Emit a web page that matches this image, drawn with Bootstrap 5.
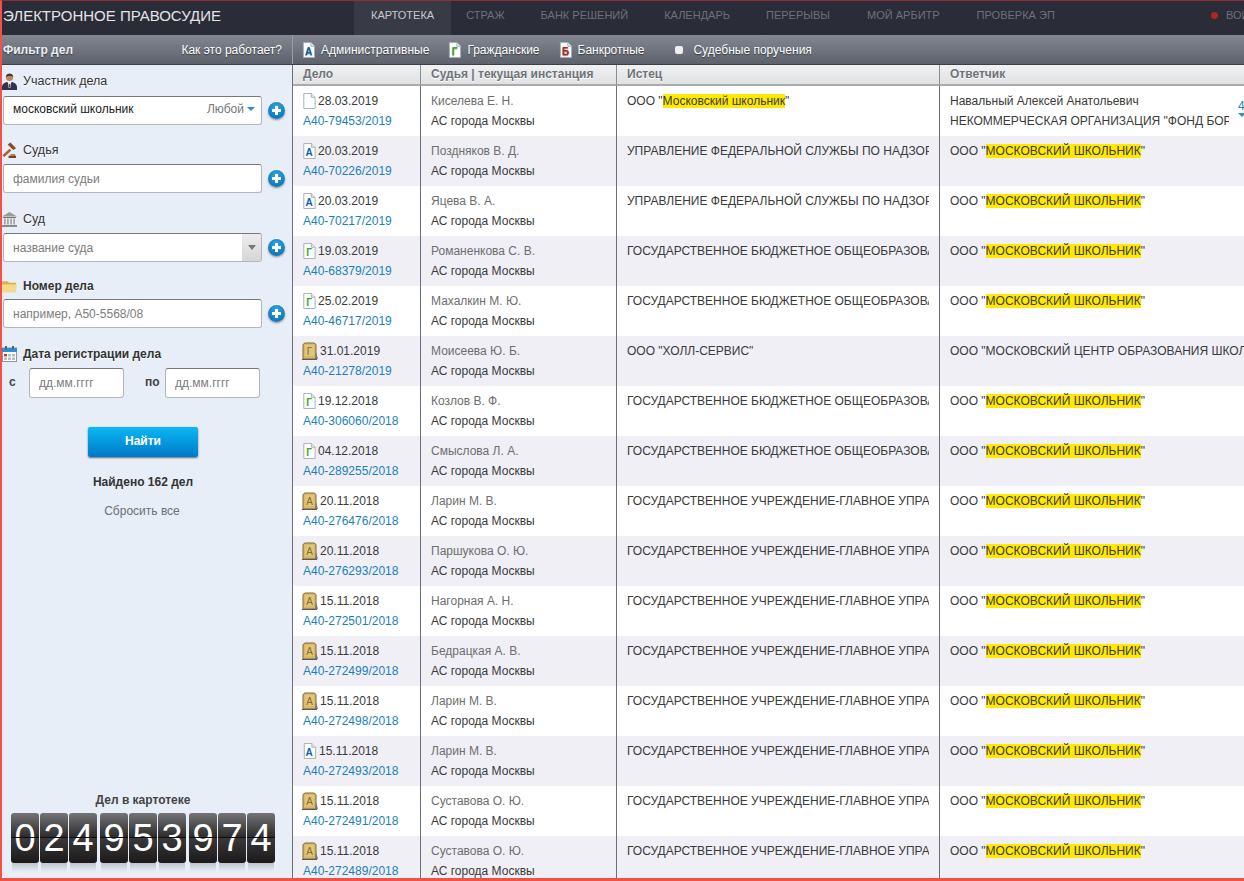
<!DOCTYPE html>
<html lang="ru"><head><meta charset="utf-8"><title>Электронное правосудие</title>
<link href="https://cdn.jsdelivr.net/npm/bootstrap@5.3.0/dist/css/bootstrap.min.css" rel="stylesheet">
<style>
html,body{height:100%;overflow:hidden;margin:0}
body{font-family:"Liberation Sans",Arial,sans-serif;font-size:12px;color:#3a3a3a;background:#fff}
.frame{height:881px;border-left:2px solid #f2514a;border-bottom:3px solid #f2514a;border-top:1px solid #8c2f33;overflow:hidden;display:flex;flex-direction:column}
.topbar{height:34px;flex:none;background:#2a2c38;display:flex;align-items:stretch}
.brand{width:352px;flex:none;color:#e4e4e6;font-size:15px;line-height:29px;padding-left:1px;white-space:nowrap}
.topnav{flex-wrap:nowrap;font-size:11px;white-space:nowrap}
.topnav a{display:block;color:#6f717a;padding:0 18px;line-height:29px;height:34px;text-decoration:none}
.topnav a.now{background:#383a46;color:#c8c9cd;padding:0 17px}
.topnav a:nth-child(2){padding:0 18px 0 15px}
.topnav a:nth-child(6){margin-left:1px}
.topnav a:last-child{margin-left:1px}
.login{margin-left:auto;color:#6f717a;font-size:11px;line-height:29px;white-space:nowrap;width:33px;overflow:hidden;display:flex;align-items:center;gap:8px;padding-bottom:5px}
.login i{display:block;flex:none;width:7px;height:7px;border-radius:50%;background:#b3261e}
.subbar{height:30px;flex:none;display:flex;align-items:center;background:linear-gradient(#828792,#5c616c);border-bottom:1px solid #3b3f48;color:#fff;text-shadow:0 1px 1px rgba(0,0,0,.5)}
.subleft{width:291px;flex:none;display:flex;justify-content:space-between;padding:0 10px 0 1px;border-right:1px solid #9a9ea6;height:100%;align-items:center}
.subleft b{font-size:12px;color:#eef0f4}
.types{display:flex;align-items:center;padding-left:9px;height:100%}
.types span.ty{display:flex;align-items:center;gap:6px}
.ty-next{margin-left:19px}
.ty-order{margin-left:31px}
.check{width:8px;height:8px;background:#eee;border-radius:2px;display:block}
.workspace{flex:1;display:flex;min-height:0}
.side{width:291px;flex:none;background:#e8eef8;border-right:1px solid #6c6f76;display:flex;flex-direction:column;padding:0 0 0 1px;overflow:hidden}
.lbl{display:flex;align-items:center;height:16px;font-size:12.500px;color:#333;text-shadow:0 1px 0 #fff;gap:6px;margin-left:-1px}
.lbl svg{flex:none}
.lbl.bold{font-size:12px;font-weight:700}
.lbl-first{margin-top:8px}
.fieldrow{display:flex;align-items:center;gap:6px}
.fr1{margin-top:7px;margin-bottom:17px}
.fr2{margin-top:6px;margin-bottom:18px}
.fr3{margin-top:6px;margin-bottom:16px}
.fr4{margin-top:5px;margin-bottom:18px}
.fld{width:259px;height:29px;display:flex;align-items:center;background:#fff;border:1px solid #b4b6b8;border-top-color:#77797c;border-radius:3px;overflow:hidden}
.fld input{border:0;outline:0;background:transparent;flex:1;min-width:0;padding:0 9px 0;font-size:12px;color:#222;height:100%;font-family:inherit}
.fr1 .fld input{padding-bottom:3px}
.fld input::placeholder{color:#7d7d7d;opacity:1}
.fld .any{color:#777;padding:0 6px 3px 0;display:flex;align-items:center;gap:3px;white-space:nowrap}
.fld .any i{display:block;border:4px solid transparent;border-top-color:#2b8fc9;border-bottom:0}
.fld .drop{width:19px;height:100%;background:linear-gradient(#ececec,#d6d6d6);display:flex;align-items:center;justify-content:center}
.fld .drop i{display:block;border:4px solid transparent;border-top:5px solid #777;border-bottom:0}
.addbtn{width:17px;height:17px;border-radius:50%;padding:0;border:0;background:radial-gradient(circle at 50% 30%,#2fa5e2,#0069ad);box-shadow:0 1px 2px rgba(0,0,0,.5),0 0 0 1px #fff;display:flex;align-items:center;justify-content:center;flex:none}
.dates{display:flex;align-items:center;margin-top:6px;font-weight:700;color:#444}
.dates .fld{width:95px;height:30px;flex:none}
.dates input{font-weight:400;padding-left:9px}
.dates .s{width:20px;margin-left:6px;padding-bottom:3px}
.dates .p{width:20px;margin-left:21px;padding-bottom:3px}
.findbtn{display:block;width:110px;height:30px;margin:29px 0 0 85px;padding:0 0 2px;border:0;border-radius:2px;background:linear-gradient(#08b8f5,#0079c5);color:#fff;font-size:12px;font-weight:700;box-shadow:0 1px 2px rgba(0,0,0,.55)}
.found{text-align:center;font-weight:700;margin-top:18px;width:280px;line-height:14px;color:#333}
.reset{text-align:center;margin-top:15px;width:278px;line-height:14px;color:#6b6f76}
.countbox{margin-top:auto;padding-bottom:6px}
.counttitle{text-align:center;width:280px;font-weight:700;color:#444;line-height:14px;margin-bottom:6px}
.digits{display:flex;margin-left:8px}
.dg{position:relative;width:28px;height:50px;margin-right:1px;border-radius:3px;background:linear-gradient(#747476,#2a2829 50%,#3a3839 50%,#1b191a);color:#fff;font-size:38px;line-height:50px;text-align:center;margin-bottom:9px}
.dg::before{content:"";position:absolute;left:0;right:0;top:24px;height:1px;background:#0d0d0d}
.dg::after{content:"";position:absolute;left:1px;right:1px;top:50px;height:9px;background:linear-gradient(rgba(150,155,165,.5),rgba(150,155,165,0))}
.dg.gapr{margin-right:3px}
.results{flex:1;min-width:0;overflow:hidden;background:#fff}
.caselist{table-layout:fixed;width:951px;margin:0;font-size:12px;border-collapse:separate;border-spacing:0}
.caselist>thead>tr>th{height:21px;padding:0 10px 2px;background:linear-gradient(#f0f1f2,#dfe1e3);color:#6f7378;font-weight:700;font-size:12px;line-height:16px;border-bottom:2px solid #a9abae;border-right:1px solid #8a8d92;box-shadow:none;white-space:nowrap;text-shadow:0 1px 0 #fff}
.caselist>tbody>tr>td{height:50px;padding:5px 10px 0;vertical-align:top;line-height:20px;border:0;border-right:1px solid #6c6f76;box-shadow:none;background:#fff;color:#3a3a3a}
.caselist>tbody>tr:nth-child(even)>td{background:#efeff5}
.caselist>thead>tr>th:last-child,.caselist>tbody>tr>td:last-child{border-right:0;padding-right:0;position:relative}
.caselist a{color:#1a7fbd;text-decoration:none;display:block}
.casedate{display:flex;align-items:center;gap:2px;height:20px;margin-left:-1px;color:#3a3a3a}
.judge{color:#6e6e6e}
.clip{overflow:hidden;white-space:nowrap}
.clip-narrow{width:279px}
.hit{background:#ffe900}
.more{position:absolute;right:-2px;top:14px;width:8px;color:#2c7fb0;font-size:12px;line-height:13px;overflow:hidden}
.more i{display:block;border:4px solid transparent;border-top-color:#2b8fc9;border-bottom:0;width:0}
</style></head><body>
<svg width="0" height="0" class="d-none">
<defs>
<symbol id="page" viewBox="0 0 14 17"><path d="M1.500.5h8l4 4v12h-12z" fill="#fff" stroke="#9fb0b5"/><path d="M9.500.5v4h4" fill="#e3eaea" stroke="#9fb0b5"/></symbol>
<symbol id="goldbook" viewBox="0 0 16 18"><path d="M1 2.500 3 1h9l2 1.500V17H1z" fill="#d9b868" stroke="#7d6a38"/><path d="M3 3h9v11H3z" fill="#e0c57c"/><path d="M14 10l2 7h-3z" fill="#777"/><path d="M0 17h15v1H0z" fill="#5a5a5a"/></symbol>
</defs></svg>
<div class="frame">
 <header class="topbar">
  <div class="brand">ЭЛЕКТРОННОЕ ПРАВОСУДИЕ</div>
  <nav class="nav topnav">
   <a class="now" href="#">КАРТОТЕКА</a><a href="#">СТРАЖ</a><a href="#">БАНК РЕШЕНИЙ</a><a href="#">КАЛЕНДАРЬ</a><a href="#">ПЕРЕРЫВЫ</a><a href="#">МОЙ АРБИТР</a><a href="#">ПРОВЕРКА ЭП</a>
  </nav>
  <div class="login"><i></i>ВОЙТИ</div>
 </header>
 <div class="subbar">
  <div class="subleft"><b>Фильтр дел</b><span>Как это работает?</span></div>
  <div class="types">
   <span class="ty"><svg width="13" height="16"><use href="#page"/><text x="6.500" y="13" font-size="10" font-weight="700" fill="#0d5fb0" text-anchor="middle">А</text></svg>Административные</span>
   <span class="ty ty-next"><svg width="13" height="16"><use href="#page"/><text x="6.500" y="13" font-size="10" font-weight="700" fill="#3aa81e" text-anchor="middle">Г</text></svg>Гражданские</span>
   <span class="ty ty-next"><svg width="13" height="16"><use href="#page"/><text x="6.500" y="13" font-size="10" font-weight="700" fill="#b3201c" text-anchor="middle">Б</text></svg>Банкротные</span>
   <span class="ty ty-order"><i class="check"></i><span class="ms-1">Судебные поручения</span></span>
  </div>
 </div>
 <div class="workspace">
  <aside class="side">
   <div class="lbl lbl-first"><svg width="15" height="17" viewBox="0 0 15 17"><circle cx="7.500" cy="4.500" r="3.600" fill="#b98a63"/><path d="M3.800 3.800C4 1 6 .4 7.500.4s3.600.7 3.700 3.400c-1.500-1-5.500-1-7.400 0z" fill="#4b3524"/><path d="M0 17v-3c0-3 3-4.500 5-5l2.500 2 2.500-2c2 .5 5 2 5 5v3z" fill="#2b3656"/><path d="M6 9l1.500 2L9 9l-.7 6h-1.600z" fill="#fff"/><path d="M7 11h1l.3 3-.8 1-.8-1z" fill="#b52b2b"/></svg>Участник дела</div>
   <div class="fieldrow fr1"><div class="fld"><input type="text" value="московский школьник"><span class="any">Любой<i></i></span></div><button class="addbtn" type="button"><svg width="11" height="11"><path d="M4 1h3v3h3v3H7v3H4V7H1V4h3z" fill="#fff"/></svg></button></div>
   <div class="lbl"><svg width="15" height="17" viewBox="0 0 16 17"><path d="M6 2l3-2 6 6-3 2z" fill="#8a4a22"/><path d="M8 6.500l2 2-7.500 7-2-2z" fill="#a8622e"/><path d="M7 14h8v2.500H7z" fill="#7a4420"/><path d="M9 12.500h5V14H9z" fill="#9a5a2c"/></svg>Судья</div>
   <div class="fieldrow fr2"><div class="fld"><input type="text" placeholder="фамилия судьи"></div><button class="addbtn" type="button"><svg width="11" height="11"><path d="M4 1h3v3h3v3H7v3H4V7H1V4h3z" fill="#fff"/></svg></button></div>
   <div class="lbl"><svg width="15" height="15" viewBox="0 0 15 15"><path d="M7.500 0 15 4.500H0z" fill="#9b9b9b"/><path d="M1 5h13v1H1z" fill="#777"/><path d="M2 6.500h1.800v6H2zM5 6.500h1.800v6H5zM8.200 6.500H10v6H8.200zM11.200 6.500H13v6h-1.800z" fill="#a8a8a8"/><path d="M0 13h15v2H0z" fill="#8a8a8a"/></svg>Суд</div>
   <div class="fieldrow fr3"><div class="fld"><input type="text" placeholder="название суда"><span class="drop"><i></i></span></div><button class="addbtn" type="button"><svg width="11" height="11"><path d="M4 1h3v3h3v3H7v3H4V7H1V4h3z" fill="#fff"/></svg></button></div>
   <div class="lbl bold"><svg width="15" height="13" viewBox="0 0 16 13"><path d="M0 2a1 1 0 0 1 1-1h5l1.500 1.500H15v2H0z" fill="#e0b050"/><path d="M0 4.500h16L14.500 13H0z" fill="#f5d98c"/></svg>Номер дела</div>
   <div class="fieldrow fr4"><div class="fld"><input type="text" placeholder="например, А50-5568/08"></div><button class="addbtn" type="button"><svg width="11" height="11"><path d="M4 1h3v3h3v3H7v3H4V7H1V4h3z" fill="#fff"/></svg></button></div>
   <div class="lbl bold"><svg width="15" height="16" viewBox="0 0 15 16"><rect x=".5" y="2" width="14" height="13.500" fill="#fff" stroke="#8b97a5"/><rect x="0" y="2" width="15" height="4" fill="#2f8fd6"/><path d="M3 0h2v3.500H3zM10 0h2v3.500h-2z" fill="#566"/><path d="M2 8h3v2.500H2z" fill="#d8343a"/><path d="M6 8h3v2.500H6zM10 8h3v2.500h-3zM2 11.500h3V14H2zM6 11.500h3V14H6zM10 11.500h3V14h-3z" fill="#b5bcc5"/></svg>Дата регистрации дела</div>
   <div class="dates"><span class="s">с</span><div class="fld"><input type="text" placeholder="дд.мм.гггг"></div><span class="p">по</span><div class="fld"><input type="text" placeholder="дд.мм.гггг"></div></div>
   <button class="findbtn" type="button">Найти</button>
   <div class="found">Найдено 162 дел</div>
   <div class="reset">Сбросить все</div>
   <div class="countbox">
    <div class="counttitle">Дел в картотеке</div>
    <div class="digits"><div class="dg">0</div><div class="dg">2</div><div class="dg gapr">4</div><div class="dg">9</div><div class="dg">5</div><div class="dg gapr">3</div><div class="dg">9</div><div class="dg">7</div><div class="dg">4</div></div>
   </div>
  </aside>
  <main class="results">
   <table class="table caselist">
    <colgroup><col style="width:128px"><col style="width:196px"><col style="width:323px"><col style="width:304px"></colgroup>
    <thead><tr><th>Дело</th><th>Судья | текущая инстанция</th><th>Истец</th><th>Ответчик</th></tr></thead>
    <tbody>
<tr><td><div class="casedate"><svg width="14" height="16"><use href="#page"/></svg>28.03.2019</div><a href="#">А40-79453/2019</a></td><td><div class="judge">Киселева Е. Н.</div><div>АС города Москвы</div></td><td><div class="clip">ООО "<span class="hit">Московский школьник</span>"</div></td><td><div class="clip clip-narrow">Навальный Алексей Анатольевич</div><div class="clip clip-narrow">НЕКОММЕРЧЕСКАЯ ОРГАНИЗАЦИЯ "ФОНД БОРЬБЫ С КОРРУПЦИЕЙ"</div><div class="more">4<i></i></div></td></tr>
<tr><td><div class="casedate"><svg width="14" height="16"><use href="#page"/><text x="7" y="13" font-size="10" font-weight="700" fill="#0d5fb0" text-anchor="middle">А</text></svg>20.03.2019</div><a href="#">А40-70226/2019</a></td><td><div class="judge">Поздняков В. Д.</div><div>АС города Москвы</div></td><td><div class="clip">УПРАВЛЕНИЕ ФЕДЕРАЛЬНОЙ СЛУЖБЫ ПО НАДЗОРУ</div></td><td><div class="clip">ООО "<span class="hit">МОСКОВСКИЙ ШКОЛЬНИК</span>"</div></td></tr>
<tr><td><div class="casedate"><svg width="14" height="16"><use href="#page"/><text x="7" y="13" font-size="10" font-weight="700" fill="#0d5fb0" text-anchor="middle">А</text></svg>20.03.2019</div><a href="#">А40-70217/2019</a></td><td><div class="judge">Яцева В. А.</div><div>АС города Москвы</div></td><td><div class="clip">УПРАВЛЕНИЕ ФЕДЕРАЛЬНОЙ СЛУЖБЫ ПО НАДЗОРУ</div></td><td><div class="clip">ООО "<span class="hit">МОСКОВСКИЙ ШКОЛЬНИК</span>"</div></td></tr>
<tr><td><div class="casedate"><svg width="14" height="16"><use href="#page"/><text x="7" y="13" font-size="10" font-weight="700" fill="#3aa81e" text-anchor="middle">Г</text></svg>19.03.2019</div><a href="#">А40-68379/2019</a></td><td><div class="judge">Романенкова С. В.</div><div>АС города Москвы</div></td><td><div class="clip">ГОСУДАРСТВЕННОЕ БЮДЖЕТНОЕ ОБЩЕОБРАЗОВАТЕЛЬНОЕ</div></td><td><div class="clip">ООО "<span class="hit">МОСКОВСКИЙ ШКОЛЬНИК</span>"</div></td></tr>
<tr><td><div class="casedate"><svg width="14" height="16"><use href="#page"/><text x="7" y="13" font-size="10" font-weight="700" fill="#3aa81e" text-anchor="middle">Г</text></svg>25.02.2019</div><a href="#">А40-46717/2019</a></td><td><div class="judge">Махалкин М. Ю.</div><div>АС города Москвы</div></td><td><div class="clip">ГОСУДАРСТВЕННОЕ БЮДЖЕТНОЕ ОБЩЕОБРАЗОВАТЕЛЬНОЕ</div></td><td><div class="clip">ООО "<span class="hit">МОСКОВСКИЙ ШКОЛЬНИК</span>"</div></td></tr>
<tr><td><div class="casedate"><svg width="16" height="18"><use href="#goldbook"/><text x="7.500" y="13" font-size="10" fill="#8a6a20" text-anchor="middle">Г</text></svg>31.01.2019</div><a href="#">А40-21278/2019</a></td><td><div class="judge">Моисеева Ю. Б.</div><div>АС города Москвы</div></td><td><div class="clip">ООО "ХОЛЛ-СЕРВИС"</div></td><td><div class="clip">ООО "МОСКОВСКИЙ ЦЕНТР ОБРАЗОВАНИЯ ШКОЛЬНИКОВ"</div></td></tr>
<tr><td><div class="casedate"><svg width="14" height="16"><use href="#page"/><text x="7" y="13" font-size="10" font-weight="700" fill="#3aa81e" text-anchor="middle">Г</text></svg>19.12.2018</div><a href="#">А40-306060/2018</a></td><td><div class="judge">Козлов В. Ф.</div><div>АС города Москвы</div></td><td><div class="clip">ГОСУДАРСТВЕННОЕ БЮДЖЕТНОЕ ОБЩЕОБРАЗОВАТЕЛЬНОЕ</div></td><td><div class="clip">ООО "<span class="hit">МОСКОВСКИЙ ШКОЛЬНИК</span>"</div></td></tr>
<tr><td><div class="casedate"><svg width="14" height="16"><use href="#page"/><text x="7" y="13" font-size="10" font-weight="700" fill="#3aa81e" text-anchor="middle">Г</text></svg>04.12.2018</div><a href="#">А40-289255/2018</a></td><td><div class="judge">Смыслова Л. А.</div><div>АС города Москвы</div></td><td><div class="clip">ГОСУДАРСТВЕННОЕ БЮДЖЕТНОЕ ОБЩЕОБРАЗОВАТЕЛЬНОЕ</div></td><td><div class="clip">ООО "<span class="hit">МОСКОВСКИЙ ШКОЛЬНИК</span>"</div></td></tr>
<tr><td><div class="casedate"><svg width="16" height="18"><use href="#goldbook"/><text x="7.500" y="13" font-size="10" fill="#8a6a20" text-anchor="middle">А</text></svg>20.11.2018</div><a href="#">А40-276476/2018</a></td><td><div class="judge">Ларин М. В.</div><div>АС города Москвы</div></td><td><div class="clip">ГОСУДАРСТВЕННОЕ УЧРЕЖДЕНИЕ-ГЛАВНОЕ УПРАВЛЕНИЕ</div></td><td><div class="clip">ООО "<span class="hit">МОСКОВСКИЙ ШКОЛЬНИК</span>"</div></td></tr>
<tr><td><div class="casedate"><svg width="16" height="18"><use href="#goldbook"/><text x="7.500" y="13" font-size="10" fill="#8a6a20" text-anchor="middle">А</text></svg>20.11.2018</div><a href="#">А40-276293/2018</a></td><td><div class="judge">Паршукова О. Ю.</div><div>АС города Москвы</div></td><td><div class="clip">ГОСУДАРСТВЕННОЕ УЧРЕЖДЕНИЕ-ГЛАВНОЕ УПРАВЛЕНИЕ</div></td><td><div class="clip">ООО "<span class="hit">МОСКОВСКИЙ ШКОЛЬНИК</span>"</div></td></tr>
<tr><td><div class="casedate"><svg width="16" height="18"><use href="#goldbook"/><text x="7.500" y="13" font-size="10" fill="#8a6a20" text-anchor="middle">А</text></svg>15.11.2018</div><a href="#">А40-272501/2018</a></td><td><div class="judge">Нагорная А. Н.</div><div>АС города Москвы</div></td><td><div class="clip">ГОСУДАРСТВЕННОЕ УЧРЕЖДЕНИЕ-ГЛАВНОЕ УПРАВЛЕНИЕ</div></td><td><div class="clip">ООО "<span class="hit">МОСКОВСКИЙ ШКОЛЬНИК</span>"</div></td></tr>
<tr><td><div class="casedate"><svg width="16" height="18"><use href="#goldbook"/><text x="7.500" y="13" font-size="10" fill="#8a6a20" text-anchor="middle">А</text></svg>15.11.2018</div><a href="#">А40-272499/2018</a></td><td><div class="judge">Бедрацкая А. В.</div><div>АС города Москвы</div></td><td><div class="clip">ГОСУДАРСТВЕННОЕ УЧРЕЖДЕНИЕ-ГЛАВНОЕ УПРАВЛЕНИЕ</div></td><td><div class="clip">ООО "<span class="hit">МОСКОВСКИЙ ШКОЛЬНИК</span>"</div></td></tr>
<tr><td><div class="casedate"><svg width="16" height="18"><use href="#goldbook"/><text x="7.500" y="13" font-size="10" fill="#8a6a20" text-anchor="middle">А</text></svg>15.11.2018</div><a href="#">А40-272498/2018</a></td><td><div class="judge">Ларин М. В.</div><div>АС города Москвы</div></td><td><div class="clip">ГОСУДАРСТВЕННОЕ УЧРЕЖДЕНИЕ-ГЛАВНОЕ УПРАВЛЕНИЕ</div></td><td><div class="clip">ООО "<span class="hit">МОСКОВСКИЙ ШКОЛЬНИК</span>"</div></td></tr>
<tr><td><div class="casedate"><svg width="15" height="16"><use href="#page"/><text x="7" y="13" font-size="10" font-weight="700" fill="#0d5fb0" text-anchor="middle">А</text></svg>15.11.2018</div><a href="#">А40-272493/2018</a></td><td><div class="judge">Ларин М. В.</div><div>АС города Москвы</div></td><td><div class="clip">ГОСУДАРСТВЕННОЕ УЧРЕЖДЕНИЕ-ГЛАВНОЕ УПРАВЛЕНИЕ</div></td><td><div class="clip">ООО "<span class="hit">МОСКОВСКИЙ ШКОЛЬНИК</span>"</div></td></tr>
<tr><td><div class="casedate"><svg width="16" height="18"><use href="#goldbook"/><text x="7.500" y="13" font-size="10" fill="#8a6a20" text-anchor="middle">А</text></svg>15.11.2018</div><a href="#">А40-272491/2018</a></td><td><div class="judge">Суставова О. Ю.</div><div>АС города Москвы</div></td><td><div class="clip">ГОСУДАРСТВЕННОЕ УЧРЕЖДЕНИЕ-ГЛАВНОЕ УПРАВЛЕНИЕ</div></td><td><div class="clip">ООО "<span class="hit">МОСКОВСКИЙ ШКОЛЬНИК</span>"</div></td></tr>
<tr><td><div class="casedate"><svg width="16" height="18"><use href="#goldbook"/><text x="7.500" y="13" font-size="10" fill="#8a6a20" text-anchor="middle">А</text></svg>15.11.2018</div><a href="#">А40-272489/2018</a></td><td><div class="judge">Суставова О. Ю.</div><div>АС города Москвы</div></td><td><div class="clip">ГОСУДАРСТВЕННОЕ УЧРЕЖДЕНИЕ-ГЛАВНОЕ УПРАВЛЕНИЕ</div></td><td><div class="clip">ООО "<span class="hit">МОСКОВСКИЙ ШКОЛЬНИК</span>"</div></td></tr>
    </tbody>
   </table>
  </main>
 </div>
</div>
<script src="https://cdn.jsdelivr.net/npm/bootstrap@5.3.0/dist/js/bootstrap.bundle.min.js"></script>
</body></html>
